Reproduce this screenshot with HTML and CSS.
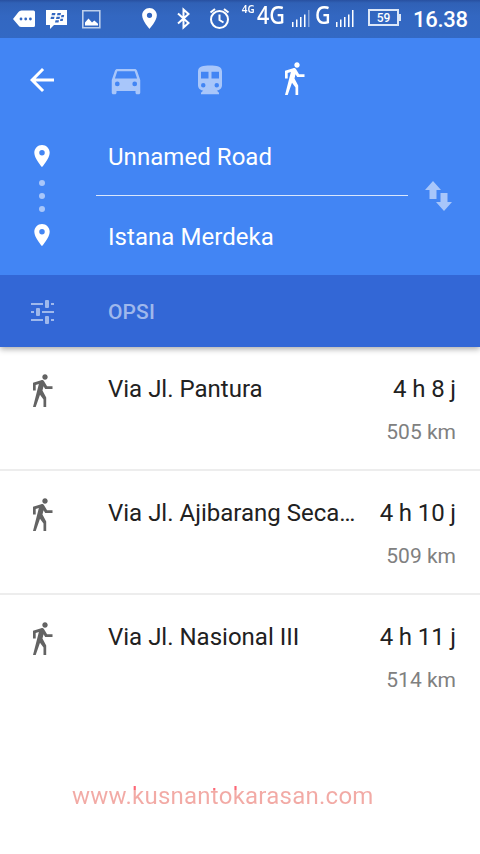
FILE: index.html
```html
<!DOCTYPE html>
<html lang="id">
<head>
<meta charset="utf-8">
<title>Rute</title>
<link rel="stylesheet" href="styles.css">
</head>
<body>
<svg width="0" height="0" class="defs">
  <symbol id="walk" viewBox="0 0 24 24"><path d="M14.12 10H19V8.2h-3.62l-2-3.33c-.3-.5-.84-.8-1.42-.8-.15 0-.33.03-.5.08L6 5.83V11h1.8V7.33l2.11-.66L6 22h1.8l2.87-8.11L13 17v5h1.8v-6.41l-2.49-4.54.73-2.87zM14 3.8c1 0 1.8-.8 1.8-1.8S15 .2 14 .2s-1.8.8-1.8 1.8.8 1.8 1.8 1.8z"/></symbol>
  <symbol id="pin" viewBox="5 2 14 20"><path d="M12 2C8.13 2 5 5.13 5 9c0 5.25 7 13 7 13s7-7.75 7-13c0-3.87-3.13-7-7-7zm0 9.5a2.5 2.5 0 0 1 0-5 2.5 2.5 0 0 1 0 5z"/></symbol>
</svg>
<header class="status">
  <svg class="status-left" width="240" height="38" viewBox="0 0 240 38">
    <path d="M13 19l5.500-7q1-1.500 3-1.500h12q1.500 0 1.500 1.500v13.500q0 1.500-1.500 1.500h-12q-2 0-3-1.500z"/>
    <g class="cut"><circle cx="21" cy="19" r="1.400"/><circle cx="25.700" cy="19" r="1.400"/><circle cx="30.400" cy="19" r="1.400"/></g>
    <path d="M46 10h21v15H54l-4 4v-4h-4z"/>
    <g class="cut"><path d="M52 13h3.500l-.5 2.300h-3.500zM57.500 13H61l-.5 2.300H57zM51 16.800h3.500L54 19h-3.500zM56.500 16.800H60l-.5 2.200H56zM61.500 15h2.700l-.5 2.200H61zM60.500 18.800h2.700l-.5 2.200H60zM55.500 20.300H59l-.5 2.200H55z"/></g>
    <path class="frame" d="M82.800 10.800h17v17h-17z"/><path d="M85 25.500v-3l3.500-4 3.500 4 2.300-2 3.700 3.300v1.700z"/>
    <use href="#pin" x="142" y="8" width="15" height="21"/>
    <path class="line" d="M178 13.500l10.500 9.500-5 4.500v-18l5 4.500-10.500 9.500"/>
    <circle class="line" cx="219.500" cy="19.500" r="8.500"/><path class="line" d="M219.500 14.500v5.500l4 2.500M210.500 12.500l4.500-3.500M228.500 12.500L224 9"/>
  </svg>
  <span class="net-small">4G</span><span class="net">4G</span>
  <svg class="bars" width="18" height="18" viewBox="0 0 18 18"><path d="M0 12h1.500v5H0zM4 9.500h1.500V17H4zM8 7h1.500v10H8zM12 4.500h1.500V17H12z"/><path opacity=".4" d="M16 0h1.500v17H16z"/></svg>
  <span class="net g">G</span>
  <svg class="bars" width="18" height="18" viewBox="0 0 18 18"><path d="M0 12h1.500v5H0zM4 9.500h1.500V17H4zM8 7h1.500v10H8zM12 4.500h1.500V17H12zM16 0h1.500v17H16z"/></svg>
  <span class="battery">59</span><i class="nub"></i>
  <span class="clock">16.38</span>
</header>
<section class="search">
  <nav class="modes">
    <svg width="36" height="36" viewBox="0 0 24 24"><path d="M20 11H7.830l5.590-5.590L12 4l-8 8 8 8 1.410-1.410L7.830 13H20z"/></svg>
    <svg class="dim" width="38" height="38" viewBox="0 0 24 24"><path d="M18.920 6.010C18.720 5.420 18.160 5 17.500 5h-11c-.66 0-1.210.42-1.420 1.010L3 12v8c0 .55.45 1 1 1h1c.55 0 1-.45 1-1v-1h12v1c0 .55.45 1 1 1h1c.55 0 1-.45 1-1v-8zM6.500 16a1.500 1.500 0 1 1 0-3 1.500 1.500 0 0 1 0 3zm11 0a1.500 1.500 0 1 1 0-3 1.500 1.500 0 0 1 0 3zM5 11l1.500-4.500h11L19 11z"/></svg>
    <svg class="dim" width="36" height="36" viewBox="0 0 24 24"><path d="M12 2.300c-4.420 0-8 .5-8 4v9.200C4 17.430 5.570 19 7.500 19L6 20.500v1h12v-1L16.500 19c1.930 0 3.500-1.570 3.500-3.500V6.300c0-3.500-3.580-4-8-4zM7.500 17a1.500 1.500 0 1 1 0-3 1.500 1.500 0 0 1 0 3zm3.500-6H6V6.500h5zm2 0V6.500h5V11zm3.500 6a1.500 1.500 0 1 1 0-3 1.500 1.500 0 0 1 0 3z"/></svg>
    <svg width="36" height="36"><use href="#walk"/></svg>
  </nav>
  <div class="endpoints">
    <div class="trail">
      <svg width="16" height="22"><use href="#pin"/></svg>
      <div class="dots"><i></i><i></i><i></i></div>
      <svg width="16" height="22"><use href="#pin"/></svg>
    </div>
    <div class="fields"><div class="field">Unnamed Road</div><div class="field">Istana Merdeka</div></div>
    <svg class="swap dim" width="28" height="32" viewBox="0 0 28 32"><path d="M8 1l8 9h-4.500v9h-7v-9H0zM15.500 13h7v9H27l-8 9-8-9h4.500z"/></svg>
  </div>
</section>
<div class="options">
  <svg width="24" height="26" viewBox="0 0 24 26"><path d="M0 4h12v2H0zM15 1h2q1 0 1 1v6q0 1-1 1h-2q-1 0-1-1V2q0-1 1-1zM20 4h3v2h-3zM0 12h3v2H0zM6 9h2q1 0 1 1v6q0 1-1 1H6q-1 0-1-1v-6q0-1 1-1zM11 12h12v2H11zM0 20h12v2H0zM15 17h2q1 0 1 1v6q0 1-1 1h-2q-1 0-1-1v-6q0-1 1-1zM20 20h3v2h-3z"/></svg>
  <span>OPSI</span>
</div>
<main class="routes">
  <article class="route"><svg width="36" height="36"><use href="#walk"/></svg><h2>Via Jl. Pantura</h2><div class="cost"><b>4 h 8 j</b><span>505 km</span></div></article>
  <article class="route"><svg width="36" height="36"><use href="#walk"/></svg><h2>Via Jl. Ajibarang Seca…</h2><div class="cost"><b>4 h 10 j</b><span>509 km</span></div></article>
  <article class="route"><svg width="36" height="36"><use href="#walk"/></svg><h2>Via Jl. Nasional III</h2><div class="cost"><b>4 h 11 j</b><span>514 km</span></div></article>
</main>
<footer class="site"><span>www.kusnantokarasan.com</span></footer>
</body>
</html>
```
FILE: styles.css
```css
* { box-sizing: border-box; }
body { margin: 0; width: 480px; height: 854px; overflow: hidden; background: #fff; color: #212121; font-family: Roboto, "Liberation Sans", sans-serif; font-size: 24px; line-height: 28px; }
svg { display: block; flex: none; fill: currentColor; }
.defs { position: absolute; }
.status { display: flex; height: 38px; color: #fff; background: linear-gradient(#2850a0 0, #3061b6 3px, #3367c1 16px, #3369c4); }
.cut { fill: #3367c1; }
.frame { fill: none; stroke: #bccfec; stroke-width: 1.6; }
.line { fill: none; stroke: #fff; stroke-width: 2; }
.net-small { flex: none; width: 17px; padding-left: 2px; font: 600 11px/18px "Noto Sans", sans-serif; transform: scaleX(.9); transform-origin: 0 0; }
.net { flex: none; width: 35px; height: 36px; margin-top: -4px; font: 500 26px/36px "Noto Sans", sans-serif; transform: scaleX(.83); transform-origin: 0 0; }
.net.g { width: 21px; margin-left: 5px; }
.bars { margin-top: 10px; }
.battery { flex: none; width: 31px; height: 17px; margin: 9px 0 0 14px; border: 2px solid #dce7f8; font-size: 12px; font-weight: 500; line-height: 14px; text-align: center; }
.nub { flex: none; width: 2px; height: 7px; margin-top: 14px; background: #dce7f8; }
.clock { margin-left: 12px; font-size: 22px; font-weight: 500; line-height: 39px; letter-spacing: -.3px; }
.search { position: relative; z-index: 1; height: 237px; background: #4285f4; color: #fff; }
.modes { display: grid; grid-template-columns: repeat(4, 84px); height: 84px; place-items: center; }
.dim { color: #a8c6fa; }
.endpoints { display: flex; height: 153px; }
.trail { width: 84px; padding-top: 23px; display: flex; flex-direction: column; align-items: center; }
.dots { display: flex; flex-direction: column; gap: 7px; margin: 13px 0 12px; }
.dots i { width: 6px; height: 6px; border-radius: 50%; background: #a8c6fa; }
.fields { width: 312px; margin-left: 12px; letter-spacing: .05px; }
.field { padding-left: 12px; height: 80px; padding-top: 21px; }
.field:first-child { height: 74px; border-bottom: 1px solid #d9e7fd; }
.field:last-child { padding-top: 27px; }
.swap { margin: 58px 0 0 17px; }
.options { display: flex; align-items: center; gap: 53px; height: 72px; padding: 2px 0 0 31px; background: #3367d6; color: #9fb8ec; box-shadow: 0 2px 6px rgba(0,0,0,.35); position: relative; font-size: 21px; font-weight: 500; letter-spacing: .1px; }
.route { display: flex; height: 124px; padding: 28px 24px 0; border-bottom: 2px solid #ededed; }
.route:last-child { border: 0; }
.route svg { color: #636363; margin-top: -1px; }
.route h2 { flex: 1; margin: 0 0 0 48px; font: inherit; white-space: nowrap; }
.cost { display: flex; flex-direction: column; align-items: flex-end; gap: 15px; }
.cost b { font-weight: 400; letter-spacing: -.12px; }
.cost span { color: #808080; font-size: 21px; }
.site { margin: 63px 0 0 72px; }
.site span { letter-spacing: .25px; background: linear-gradient(#fc6675 0 8px, #f2aaa5 8px); background-clip: text; -webkit-background-clip: text; color: transparent; }
```
